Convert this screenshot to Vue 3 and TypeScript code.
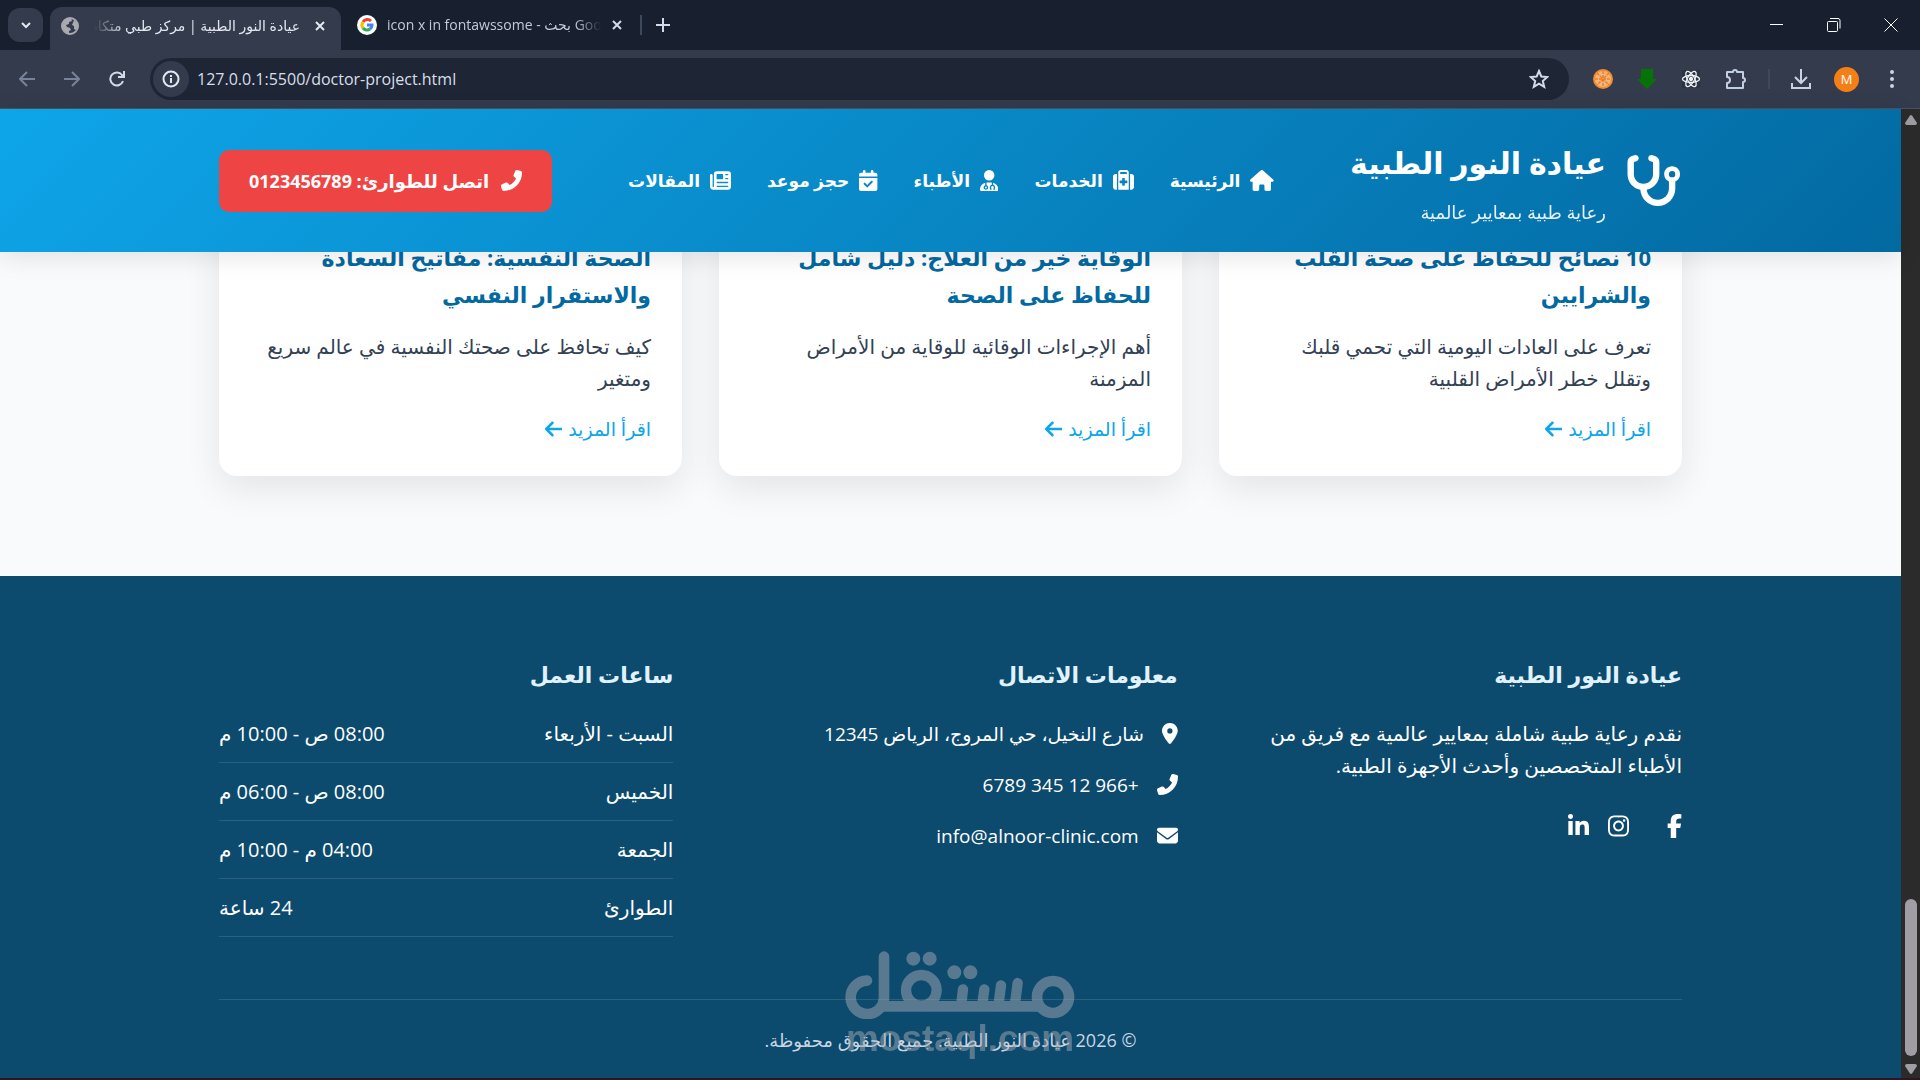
<script setup lang="ts">
import { h, ref } from 'vue'

type Glyph = { w: number; d: string; flip?: boolean }

const glyphs: Record<string, Glyph> = {
  stethoscope: { w: 576, d: 'M142.4 21.9c5.6 16.8-3.5 34.9-20.2 40.5L96 71.1V192c0 53 43 96 96 96s96-43 96-96V71.1l-26.1-8.7c-16.8-5.6-25.8-23.7-20.2-40.5s23.7-25.8 40.5-20.2l26.1 8.7C334.4 19.1 352 43.5 352 71.1V192c0 77.2-54.6 141.6-127.3 156.7C231 404.6 278.4 448 336 448c61.9 0 112-50.1 112-112V265.3c-28.3-12.3-48-40.5-48-73.3c0-44.2 35.8-80 80-80s80 35.8 80 80c0 32.8-19.7 61-48 73.3V336c0 97.2-78.8 176-176 176c-92.9 0-168.9-71.9-175.5-163.1C87.2 334.2 32 269.6 32 192V71.1c0-27.5 17.6-52 43.8-60.7l26.1-8.7c16.8-5.6 34.9 3.5 40.5 20.2zM480 224a32 32 0 1 0 0-64 32 32 0 1 0 0 64z' },
  home: { w: 576, d: 'M575.8 255.5c0 18-15 32.1-32 32.1h-32l.7 160.2c0 2.7-.2 5.4-.5 8.1V472c0 22.1-17.9 40-40 40H456c-1.1 0-2.2 0-3.3-.1c-1.4 .1-2.8 .1-4.2 .1H416 392c-22.1 0-40-17.9-40-40V448 384c0-17.7-14.3-32-32-32H256c-17.7 0-32 14.3-32 32v64 24c0 22.1-17.9 40-40 40H160 128.1c-1.5 0-3-.1-4.5-.2c-1.2 .1-2.4 .2-3.6 .2H104c-22.1 0-40-17.9-40-40V360c0-.9 0-1.9 .1-2.8V287.6H32c-18 0-32-14-32-32.1c0-9 3-17 10-24L266.4 8c7-7 15-8 22-8s15 2 21 7L564.8 231.5c8 7 12 15 11 24z' },
  services: { w: 512, d: 'M184 48H328c4.4 0 8 3.6 8 8V96H176V56c0-4.4 3.6-8 8-8zm-56 8V96v32V480H384V128 96 56c0-30.9-25.1-56-56-56H184c-30.9 0-56 25.1-56 56zM96 96H64C28.7 96 0 124.7 0 160V416c0 35.3 28.7 64 64 64H96V96zM416 480h32c35.3 0 64-28.7 64-64V160c0-35.3-28.7-64-64-64H416V480zM224 208c0-8.8 7.2-16 16-16h32c8.8 0 16 7.2 16 16v48h48c8.8 0 16 7.2 16 16v32c0 8.8-7.2 16-16 16H288v48c0 8.8-7.2 16-16 16H240c-8.8 0-16-7.2-16-16V320H176c-8.8 0-16-7.2-16-16V272c0-8.8 7.2-16 16-16h48V208z' },
  doctor: { w: 448, d: 'M224 256A128 128 0 1 0 224 0a128 128 0 1 0 0 256zm-96 55.2C54 332.9 0 401.3 0 482.3C0 498.7 13.3 512 29.7 512H418.3c16.4 0 29.7-13.3 29.7-29.7c0-81-54-149.4-128-171.1V362c27.6 7.1 48 32.2 48 62v40c0 8.8-7.2 16-16 16H336c-8.8 0-16-7.2-16-16s7.2-16 16-16V424c0-17.7-14.3-32-32-32s-32 14.3-32 32v24c8.8 0 16 7.2 16 16s-7.2 16-16 16H256c-8.8 0-16-7.2-16-16V424c0-29.8 20.4-54.9 48-62V304.9c-6-.6-12.1-.9-18.3-.9H178.3c-6.2 0-12.3 .3-18.3 .9v65.4c23.1 6.9 40 28.3 40 53.7c0 30.9-25.1 56-56 56s-56-25.1-56-56c0-25.4 16.9-46.8 40-53.7V311.2zM144 448a24 24 0 1 0 0-48 24 24 0 1 0 0 48z' },
  booking: { w: 448, d: 'M128 0c17.7 0 32 14.3 32 32V64H288V32c0-17.7 14.3-32 32-32s32 14.3 32 32V64h48c26.5 0 48 21.5 48 48v48H0V112C0 85.5 21.5 64 48 64H96V32c0-17.7 14.3-32 32-32zM0 192H448V464c0 26.5-21.5 48-48 48H48c-26.5 0-48-21.5-48-48V192zM329 305c9.4-9.4 9.4-24.6 0-33.9s-24.6-9.4-33.9 0l-95 95-47-47c-9.4-9.4-24.6-9.4-33.9 0s-9.4 24.6 0 33.9l64 64c9.4 9.4 24.6 9.4 33.9 0L329 305z' },
  articles: { w: 512, d: 'M96 96c0-35.3 28.7-64 64-64H448c35.3 0 64 28.7 64 64V416c0 35.3-28.7 64-64 64H80c-44.2 0-80-35.8-80-80V128c0-17.7 14.3-32 32-32s32 14.3 32 32V400c0 8.8 7.2 16 16 16s16-7.2 16-16V96zm64 24v80c0 13.3 10.7 24 24 24H296c13.3 0 24-10.7 24-24V120c0-13.3-10.7-24-24-24H184c-13.3 0-24 10.7-24 24zm208-8c0 8.8 7.2 16 16 16h48c8.8 0 16-7.2 16-16s-7.2-16-16-16H384c-8.8 0-16 7.2-16 16zm0 96c0 8.8 7.2 16 16 16h48c8.8 0 16-7.2 16-16s-7.2-16-16-16H384c-8.8 0-16 7.2-16 16zM160 304c0 8.8 7.2 16 16 16H432c8.8 0 16-7.2 16-16s-7.2-16-16-16H176c-8.8 0-16 7.2-16 16zm0 96c0 8.8 7.2 16 16 16H432c8.8 0 16-7.2 16-16s-7.2-16-16-16H176c-8.8 0-16 7.2-16 16z' },
  phone: { w: 512, flip: true, d: 'M164.9 24.6c-7.7-18.6-28-28.5-47.4-23.2l-88 24C12.1 30.2 0 46 0 64C0 311.4 200.6 512 448 512c18 0 33.8-12.1 38.6-29.5l24-88c5.3-19.4-4.6-39.7-23.2-47.4l-96-40c-16.3-6.8-35.2-2.1-46.3 11.6L304.7 368C234.3 334.7 177.3 277.7 144 207.3L193.3 167c13.7-11.2 18.4-30 11.6-46.3l-40-96z' },
  mail: { w: 512, d: 'M48 64C21.5 64 0 85.5 0 112c0 15.1 7.1 29.3 19.2 38.4L236.8 313.6c11.4 8.5 27 8.5 38.4 0L492.8 150.4c12.1-9.1 19.2-23.3 19.2-38.4c0-26.5-21.5-48-48-48H48zM0 176V384c0 35.3 28.7 64 64 64H448c35.3 0 64-28.7 64-64V176L294.4 339.2c-22.8 17.1-54 17.1-76.8 0L0 176z' },
  pin: { w: 384, d: 'M215.7 499.2C267 435 384 279.4 384 192C384 86 298 0 192 0S0 86 0 192c0 87.4 117 243 168.3 307.2c12.3 15.3 35.1 15.3 47.4 0zM192 128a64 64 0 1 1 0 128 64 64 0 1 1 0-128z' },
  arrow: { w: 448, d: 'M9.4 233.4c-12.5 12.5-12.5 32.8 0 45.3l160 160c12.5 12.5 32.8 12.5 45.3 0s12.5-32.8 0-45.3L109.2 288 416 288c17.7 0 32-14.3 32-32s-14.3-32-32-32l-306.7 0L214.6 118.6c12.5-12.5 12.5-32.8 0-45.3s-32.8-12.5-45.3 0l-160 160z' },
  facebook: { w: 320, d: 'M80 299.3V512H196V299.3h86.5l18-97.8H196V166.9c0-51.7 20.3-71.5 72.7-71.5c16.3 0 29.4 .4 37 1.2V7.9C291.4 4 256.4 0 236.2 0C129.3 0 80 50.5 80 159.4v42.1H14v97.8H80z' },
  instagram: { w: 448, d: 'M224.1 141c-63.6 0-114.9 51.3-114.9 114.9s51.3 114.9 114.9 114.9S339 319.5 339 255.9 287.7 141 224.1 141zm0 189.6c-41.1 0-74.7-33.5-74.7-74.7s33.5-74.7 74.7-74.7 74.7 33.5 74.7 74.7-33.6 74.7-74.7 74.7zm146.4-194.3c0 14.9-12 26.8-26.8 26.8-14.9 0-26.8-12-26.8-26.8s12-26.8 26.8-26.8 26.8 12 26.8 26.8zm76.1 27.2c-1.7-35.9-9.9-67.7-36.2-93.9-26.2-26.2-58-34.4-93.9-36.2-37-2.1-147.9-2.1-184.9 0-35.8 1.7-67.6 9.9-93.9 36.1s-34.4 58-36.2 93.9c-2.1 37-2.1 147.9 0 184.9 1.7 35.9 9.9 67.7 36.2 93.9s58 34.4 93.9 36.2c37 2.1 147.9 2.1 184.9 0 35.9-1.7 67.7-9.9 93.9-36.2 26.2-26.2 34.4-58 36.2-93.9 2.1-37 2.1-147.8 0-184.8zM398.8 388c-7.8 19.6-22.9 34.7-42.6 42.6-29.5 11.7-99.5 9-132.1 9s-102.7 2.6-132.1-9c-19.6-7.8-34.7-22.9-42.6-42.6-11.7-29.5-9-99.5-9-132.1s-2.6-102.7 9-132.1c7.8-19.6 22.9-34.7 42.6-42.6 29.5-11.7 99.5-9 132.1-9s102.7-2.6 132.1 9c19.6 7.8 34.7 22.9 42.6 42.6 11.7 29.5 9 99.5 9 132.1s2.7 102.7-9 132.1z' },
  linkedin: { w: 448, d: 'M100.3 448H7.4V148.9h92.9zM53.8 108.1C24.1 108.1 0 83.5 0 53.8a53.8 53.8 0 0 1 107.6 0c0 29.7-24.1 54.3-53.8 54.3zM447.9 448h-92.7V302.4c0-34.7-.7-79.2-48.3-79.2-48.3 0-55.7 37.7-55.7 76.7V448h-92.8V148.9h89.1v40.8h1.3c12.4-23.5 42.7-48.3 87.9-48.3 94 0 111.3 61.9 111.3 142.3V448z' },
}

const Icon = ({ name }: { name: string }) => {
  const g = glyphs[name]
  return h('svg', { viewBox: `0 0 ${g.w} 512`, fill: 'currentColor', 'aria-hidden': 'true' }, [
    h('path', { d: g.d, transform: g.flip ? `translate(${g.w} 0) scale(-1 1)` : undefined }),
  ])
}
Icon.props = ['name']

const address = ref('127.0.0.1:5500/doctor-project.html')

const nav = [
  { icon: 'home', label: 'الرئيسية' },
  { icon: 'services', label: 'الخدمات' },
  { icon: 'doctor', label: 'الأطباء' },
  { icon: 'booking', label: 'حجز موعد' },
  { icon: 'articles', label: 'المقالات' },
]

const articles = [
  { title: ['10 نصائح للحفاظ على صحة القلب', 'والشرايين'], text: ['تعرف على العادات اليومية التي تحمي قلبك', 'وتقلل خطر الأمراض القلبية'] },
  { title: ['الوقاية خير من العلاج: دليل شامل', 'للحفاظ على الصحة'], text: ['أهم الإجراءات الوقائية للوقاية من الأمراض', 'المزمنة'] },
  { title: ['الصحة النفسية: مفاتيح السعادة', 'والاستقرار النفسي'], text: ['كيف تحافظ على صحتك النفسية في عالم سريع', 'ومتغير'] },
]

const contacts = [
  { icon: 'pin', text: 'شارع النخيل، حي المروج، الرياض 12345' },
  { icon: 'phone', text: '+966 12 345 6789' },
  { icon: 'mail', text: 'info@alnoor-clinic.com' },
]

const hours = [
  { day: 'السبت - الأربعاء', time: '08:00 ص - 10:00 م' },
  { day: 'الخميس', time: '08:00 ص - 06:00 م' },
  { day: 'الجمعة', time: '04:00 م - 10:00 م' },
  { day: 'الطوارئ', time: '24 ساعة' },
]
</script>

<template>
  <div class="window">
    <div class="tabstrip">
      <button class="tab-search" aria-label="Search tabs">
        <svg width="12" height="12" viewBox="0 0 12 12" fill="none" stroke="#e3e8f0" stroke-width="2"><path d="M2 4l4 4 4-4" /></svg>
      </button>
      <div class="tab active">
        <svg class="favicon" viewBox="0 0 20 20">
          <circle cx="10" cy="10" r="8" fill="#333b4c" stroke="#a9a9b0" stroke-width="2" />
          <path d="M3 8Q4 2 11 2l1 3-3 1v2l-3 1 1 2 3 1 1 2-2 1v3q-5-1-6-6zM14 4l3 3 1 4-2 3-2-1v-3l-2-1z" fill="#a9a9b0" />
        </svg>
        <span class="tab-title fade-left" dir="rtl">عيادة النور الطبية | مركز طبي متكامل</span>
        <button class="plain" aria-label="Close tab">
          <svg width="12" height="12" viewBox="0 0 12 12" stroke="#e3e8f0" stroke-width="2"><path d="M2 2l8 8M10 2l-8 8" /></svg>
        </button>
      </div>
      <div class="tab">
        <svg class="favicon" viewBox="0 0 20 20">
          <circle cx="10" cy="10" r="10" fill="#fff" />
          <g fill="none" stroke-width="3">
            <path d="M14 6A5 5 0 0 0 6 7" stroke="#ea4335" />
            <path d="M6 7a5 5 0 0 0 0 6" stroke="#fbbc05" />
            <path d="M6 13a5 5 0 0 0 7 1" stroke="#34a853" />
            <path d="M13 14a5 5 0 0 0 2-4h-5" stroke="#4285f4" />
          </g>
        </svg>
        <span class="tab-title fade-right">icon x in fontawssome - بحث Google</span>
        <button class="plain" aria-label="Close tab">
          <svg width="12" height="12" viewBox="0 0 12 12" stroke="#d3dbe8" stroke-width="2"><path d="M2 2l8 8M10 2l-8 8" /></svg>
        </button>
      </div>
      <span class="divider"></span>
      <button class="plain" aria-label="New tab">
        <svg width="14" height="14" viewBox="0 0 14 14" stroke="#d3dbe8" stroke-width="2"><path d="M7 0v14M0 7h14" /></svg>
      </button>
      <div class="window-controls">
        <button class="plain" aria-label="Minimize">
          <svg width="14" height="14" viewBox="0 0 14 14" stroke="#fff"><path d="M0 6.500h13" /></svg>
        </button>
        <button class="plain" aria-label="Restore">
          <svg width="14" height="14" viewBox="0 0 14 14" fill="none" stroke="#fff"><rect x=".5" y="3.500" width="10" height="10" rx="1" /><path d="M3 .5h8a2 2 0 0 1 2 2v8" /></svg>
        </button>
        <button class="plain" aria-label="Close">
          <svg width="14" height="14" viewBox="0 0 14 14" stroke="#fff"><path d="M.5 .5l13 13M13.500 .5l-13 13" /></svg>
        </button>
      </div>
    </div>

    <div class="toolbar">
      <div class="nav-buttons">
        <button class="plain" aria-label="Back"><svg width="16" height="16" viewBox="0 0 16 16" fill="none" stroke="#77839a" stroke-width="2"><path d="M16 8H2M8 1L1 8l7 7" /></svg></button>
        <button class="plain" aria-label="Forward"><svg width="16" height="16" viewBox="0 0 16 16" fill="none" stroke="#77839a" stroke-width="2"><path d="M0 8h14M8 1l7 7-7 7" /></svg></button>
        <button class="plain" aria-label="Reload"><svg width="16" height="16" viewBox="0 0 16 16" fill="none" stroke="#d3dbe8" stroke-width="2"><path d="M14 10a6.500 6.500 0 1 1-1-6l2 2" /><path d="M15 0v6H9" /></svg></button>
      </div>
      <div class="omnibox">
        <button class="site-info" aria-label="Site information">
          <svg width="18" height="18" viewBox="0 0 18 18" fill="none" stroke="#e3e8f0" stroke-width="2"><circle cx="9" cy="9" r="7.500" /><path d="M9 8v5M9 5v2" /></svg>
        </button>
        <input v-model="address" class="address" type="text" aria-label="Address" />
        <button class="plain" aria-label="Bookmark">
          <svg width="20" height="20" viewBox="0 0 20 20" fill="none" stroke="#d3dbe8" stroke-width="2"><path d="M10 2l2.300 5.500 6 .5-4.500 4 1.400 5.800L10 14.700l-5.200 3.100L6.200 12 1.700 8l6-.5z" /></svg>
        </button>
      </div>
      <div class="extensions">
        <button class="plain" aria-label="Orange extension">
          <svg width="20" height="20" viewBox="0 0 20 20"><circle cx="10" cy="10" r="10" fill="#f58a33" /><circle cx="10" cy="10" r="8" fill="#f3b67c" /><path d="M10 2v16M2 10h16M4 4l12 12M16 4L4 16" stroke="#f07f26" stroke-width="1.500" stroke-dasharray="3 1" /></svg>
        </button>
        <button class="plain" aria-label="Download extension">
          <svg width="20" height="20" viewBox="0 0 20 20"><path d="M4 0h12v10h4L10 20 0 10h4z" fill="#077307" /></svg>
        </button>
        <button class="plain" aria-label="React developer tools">
          <svg width="20" height="20" viewBox="0 0 20 20" fill="none" stroke="#eef1f6" stroke-width="1.300"><rect x="1" y="1" width="18" height="18" fill="#2c3443" stroke="none" /><ellipse cx="10" cy="10" rx="8.500" ry="3.500" /><ellipse cx="10" cy="10" rx="8.500" ry="3.500" transform="rotate(60 10 10)" /><ellipse cx="10" cy="10" rx="8.500" ry="3.500" transform="rotate(120 10 10)" /><circle cx="10" cy="10" r="1.500" fill="#eef1f6" /></svg>
        </button>
        <button class="plain" aria-label="Extensions">
          <svg width="22" height="22" viewBox="0 0 22 22" fill="none" stroke="#c2cfe2" stroke-width="2"><path d="M3 4h5a2 2 0 0 1 4 0h6v6a2 2 0 0 1 0 4v6H2v-5a3 3 0 0 0 0-6V4z" stroke-linejoin="round" /></svg>
        </button>
        <span class="divider"></span>
        <button class="plain" aria-label="Downloads">
          <svg width="20" height="20" viewBox="0 0 20 20" fill="none" stroke="#c9d3e2" stroke-width="2"><path d="M10 0v13M4 8l6 6 6-6M1 14v5h18v-5" /></svg>
        </button>
        <button class="avatar" aria-label="Profile">M</button>
        <button class="plain" aria-label="Menu">
          <svg width="20" height="20" viewBox="0 0 20 20" fill="#c9d3e2"><circle cx="10" cy="3" r="2" /><circle cx="10" cy="10" r="2" /><circle cx="10" cy="17" r="2" /></svg>
        </button>
      </div>
    </div>

    <div class="viewport">
      <div class="page" dir="rtl" lang="ar">
        <header class="site-header">
          <div class="container header-row">
            <div class="brand">
              <Icon name="stethoscope" class="brand-icon" />
              <div class="brand-text">
                <h1>عيادة النور الطبية</h1>
                <p>رعاية طبية بمعايير عالمية</p>
              </div>
            </div>
            <nav class="site-nav">
              <a v-for="item in nav" :key="item.icon" href="#"><Icon :name="item.icon" />{{ item.label }}</a>
            </nav>
            <a class="emergency" href="#"><Icon name="phone" /><span>اتصل للطوارئ: 0123456789</span></a>
          </div>
        </header>

        <main class="blog">
          <div class="container cards">
            <article v-for="a in articles" :key="a.title[0]" class="card">
              <h3><template v-for="(l, i) in a.title" :key="i"><br v-if="i" />{{ l }}</template></h3>
              <p><template v-for="(l, i) in a.text" :key="i"><br v-if="i" />{{ l }}</template></p>
              <a href="#" class="more">اقرأ المزيد<Icon name="arrow" /></a>
            </article>
          </div>
        </main>

        <footer class="site-footer">
          <div class="container">
            <div class="footer-grid">
              <section>
                <h3>عيادة النور الطبية</h3>
                <p>نقدم رعاية طبية شاملة بمعايير عالمية مع فريق من<br />الأطباء المتخصصين وأحدث الأجهزة الطبية.</p>
                <div class="social">
                  <a href="#" aria-label="Facebook"><Icon name="facebook" /></a>
                  <a href="#" aria-label="Instagram" class="apart"><Icon name="instagram" /></a>
                  <a href="#" aria-label="LinkedIn"><Icon name="linkedin" /></a>
                </div>
              </section>
              <section>
                <h3>معلومات الاتصال</h3>
                <ul class="contacts">
                  <li v-for="c in contacts" :key="c.icon"><Icon :name="c.icon" /><span>{{ c.text }}</span></li>
                </ul>
              </section>
              <section>
                <h3>ساعات العمل</h3>
                <ul class="hours">
                  <li v-for="r in hours" :key="r.day"><span>{{ r.day }}</span><span>{{ r.time }}</span></li>
                </ul>
              </section>
            </div>
            <p class="copyright">© 2026 عيادة النور الطبية. جميع الحقوق محفوظة.</p>
          </div>
        </footer>
      </div>

      <div class="scrollbar">
        <svg width="12" height="10" viewBox="0 0 12 10" fill="#a09ea4"><path d="M6 0q1 0 2 2l4 6q0 2-2 2H2Q0 10 0 8l4-6q1-2 2-2z" /></svg>
        <span class="thumb"></span>
        <svg width="12" height="10" viewBox="0 0 12 10" fill="#a09ea4"><path d="M6 10q-1 0-2-2L0 2Q0 0 2 0h8q2 0 2 2L8 8q-1 2-2 2z" /></svg>
      </div>
    </div>

    <div class="watermark">
      <svg viewBox="315 95 690 204" fill="none" stroke="#a3a9b0" stroke-width="32" stroke-linecap="round" role="img" aria-label="مستقل">
        <circle cx="939" cy="233" r="48" />
        <path d="M425 261H895" stroke-linecap="butt" />
        <path d="M833 191l-8 62M783 198l-7 55M733 210l-6 43M669 210l-5 43" stroke-width="31" />
        <circle cx="544" cy="213" r="46" stroke-width="31" />
        <path d="M432 112V233A50 50 0 1 1 381 184" />
        <g fill="#a3a9b0" stroke="none">
          <circle cx="643" cy="159" r="21" /><circle cx="691" cy="159" r="21" />
          <circle cx="520" cy="118" r="21" /><circle cx="569" cy="118" r="21" />
        </g>
      </svg>
      <span>mostaql.com</span>
    </div>
  </div>
</template>

<style>
body {
  margin: 0;
  background: #0c4a6e;
}
</style>

<style scoped>
.window {
  position: relative;
  display: flex;
  flex-direction: column;
  height: 100vh;
  overflow: hidden;
  box-sizing: border-box;
  border-bottom: 2px solid #2c1620;
  font-family: "Open Sans", "DejaVu Sans", sans-serif;
}
button { font: inherit; cursor: pointer; }
svg { display: block; flex: none; }
a { text-decoration: none; color: inherit; }
h1, h3, p, ul { margin: 0; padding: 0; list-style: none; }

.plain {
  display: flex;
  align-items: center;
  justify-content: center;
  padding: 0;
  border: 0;
  background: none;
}

.tabstrip {
  display: flex;
  align-items: center;
  flex: none;
  height: 50px;
  padding-left: 8px;
  background: #182030;
}
.tab-search {
  display: flex;
  align-items: center;
  justify-content: center;
  width: 35px;
  height: 34px;
  margin-right: 7px;
  border: 0;
  border-radius: 12px;
  background: #333b4c;
}
.tab {
  display: flex;
  align-items: center;
  gap: 10px;
  box-sizing: border-box;
  width: 290px;
  height: 36px;
  padding: 0 8px 0 16px;
  color: #c3cad6;
}
.tab.active {
  align-self: flex-end;
  gap: 14px;
  width: 291px;
  height: 43px;
  padding: 0 15px 6px 10px;
  border-radius: 12px 12px 0 0;
  background: #333b4c;
  color: #e3e8f0;
}
.favicon { width: 20px; height: 20px; }
.tab-title {
  flex: 1;
  overflow: hidden;
  white-space: nowrap;
  font-size: 14px;
  line-height: 24px;
}
.fade-left { mask-image: linear-gradient(to left, #000 85%, transparent); }
.fade-right { mask-image: linear-gradient(to right, #000 88%, transparent); }
.divider { width: 2px; height: 20px; background: #3f495c; }
.tabstrip > .divider { margin: 0 14px 0 9px; }
.window-controls {
  display: flex;
  gap: 43px;
  margin-left: auto;
  padding-right: 22px;
}

.toolbar {
  display: flex;
  align-items: center;
  flex: none;
  height: 58px;
  padding: 0 18px 0 19px;
  border-bottom: 1px solid #4a5162;
  background: #333b4c;
}
.nav-buttons { display: flex; gap: 29px; margin-right: 25px; }
.omnibox {
  display: flex;
  align-items: center;
  flex: 1;
  height: 42px;
  padding: 0 20px 0 3px;
  border-radius: 21px;
  background: #1e2635;
}
.site-info {
  display: flex;
  align-items: center;
  justify-content: center;
  width: 36px;
  height: 36px;
  padding: 0;
  border: 0;
  border-radius: 50%;
  background: #333b4c;
}
.address {
  flex: 1;
  margin-left: 8px;
  padding: 0;
  border: 0;
  outline: 0;
  background: none;
  color: #d8deea;
  font-family: "Open Sans", sans-serif;
  font-size: 16px;
}
.extensions { display: flex; align-items: center; gap: 24px; margin-left: 24px; }
.extensions > .divider { margin: 0 -3px; }
.avatar {
  width: 25px;
  height: 25px;
  margin: 0 -1px;
  padding: 0;
  border: 0;
  border-radius: 50%;
  background: #f57f17;
  color: #fff;
  font-size: 13px;
}

.viewport { display: flex; flex: 1; min-height: 0; }
.page {
  flex: 1;
  min-width: 0;
  background: #f8fafc;
  color: #334155;
  font-size: 20px;
  line-height: 32px;
}
.container { max-width: 1463px; margin: 0 auto; }

.site-header {
  position: relative;
  z-index: 2;
  background: linear-gradient(135deg, #0ea5e9, #0369a1);
  color: #fff;
  box-shadow: 0 5px 24px rgba(0, 0, 0, 0.1);
}
.header-row { display: flex; align-items: center; justify-content: space-between; height: 143px; }
.brand { display: flex; align-items: center; gap: 18px; }
.brand-icon { width: 58px; height: 51px; }
.brand-text h1 { font-size: 30px; line-height: 62px; white-space: nowrap; }
.brand-text p { font-size: 18px; line-height: 36px; opacity: 0.9; white-space: nowrap; }
.site-nav { display: flex; gap: 36px; }
.site-nav a { display: flex; align-items: center; gap: 10px; font-size: 17px; font-weight: 700; white-space: nowrap; }
.site-nav svg, .emergency svg { height: 21px; }
.emergency {
  display: flex;
  align-items: center;
  gap: 12px;
  padding: 15px 30px;
  border-radius: 10px;
  background: #ef4444;
  font-size: 18px;
  font-weight: 700;
  white-space: nowrap;
}

.blog { margin-top: -44px; padding-bottom: 100px; }
.cards { display: grid; grid-template-columns: repeat(3, 1fr); gap: 37px; }
.card {
  padding: 31px;
  border-radius: 18px;
  background: #fff;
  box-shadow: 0 12px 36px rgba(0, 0, 0, 0.09);
  white-space: nowrap;
}
.card h3 { margin-bottom: 18px; color: #0369a1; font-size: 22px; line-height: 37px; }
.card p { margin-bottom: 18px; }
.more { display: flex; align-items: center; gap: 6px; color: #0ea5e9; font-size: 19px; }
.more svg { height: 20px; }

.site-footer { padding: 80px 0 23px; background: #0c4a6e; color: #fff; white-space: nowrap; }
.footer-grid { display: grid; grid-template-columns: repeat(3, 1fr); gap: 50px; margin-bottom: 49px; }
.footer-grid h3 { margin-bottom: 25px; color: #e0f2fe; font-size: 22px; line-height: 37px; }
.social { display: flex; gap: 19px; margin-top: 32px; }
.social svg { height: 24px; }
.social .apart { margin-right: 19px; }
.contacts li { display: flex; align-items: center; gap: 18px; margin-bottom: 19px; font-size: 19px; }
.contacts svg { height: 21px; margin-bottom: 2px; }
.hours li {
  display: flex;
  justify-content: space-between;
  margin-bottom: 13px;
  padding-bottom: 12px;
  border-bottom: 1px solid rgba(255, 255, 255, 0.12);
}
.copyright {
  padding-top: 25px;
  border-top: 1px solid rgba(255, 255, 255, 0.12);
  color: #c8d6e2;
  font-size: 18px;
  line-height: 30px;
  text-align: center;
}

.scrollbar {
  display: flex;
  flex-direction: column;
  align-items: center;
  justify-content: flex-end;
  flex: none;
  width: 19px;
  padding: 6px 0 4px;
  box-sizing: border-box;
  background: #2b2b2b;
}
.scrollbar svg:first-child { margin-bottom: auto; }
.thumb { width: 12px; height: 157px; margin-bottom: 8px; border-radius: 6px; background: #a09ea4; }

.watermark {
  position: absolute;
  z-index: 3;
  bottom: 19px;
  left: 50%;
  width: 230px;
  transform: translateX(-50%);
  opacity: 0.5;
  pointer-events: none;
  color: #a3a9b0;
  font: 700 37px/40px "Liberation Sans", sans-serif;
  text-align: center;
}
</style>
